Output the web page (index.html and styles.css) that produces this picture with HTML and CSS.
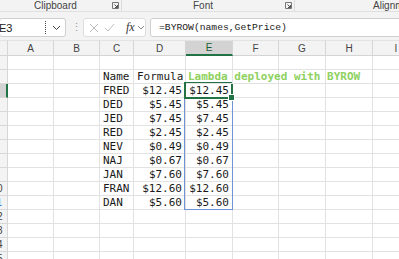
FILE: index.html
```html
<!DOCTYPE html>
<html>
<head>
<meta charset="utf-8">
<link rel="stylesheet" href="styles.css">
</head>
<body>
<div class="app">
  <div class="ribbon">
    <div class="group g1"><span class="glabel">Clipboard</span><span class="launcher"><svg width="7" height="7" viewBox="0 0 7 7"><path d="M0.5 0.5H6.5V6.5H0.5Z" fill="none" stroke="#777" stroke-width="1"/><path d="M2.5 2.5L5.5 5.5M3 5.5H5.5V3" fill="none" stroke="#555" stroke-width="1"/></svg></span></div>
    <div class="group g2"><span class="glabel">Font</span><span class="launcher"><svg width="7" height="7" viewBox="0 0 7 7"><path d="M0.5 0.5H6.5V6.5H0.5Z" fill="none" stroke="#777" stroke-width="1"/><path d="M2.5 2.5L5.5 5.5M3 5.5H5.5V3" fill="none" stroke="#555" stroke-width="1"/></svg></span></div>
    <div class="group g3"><span class="glabel">Alignment</span></div>
  </div>
  <div class="fbar">
    <div class="namebox">
      <span class="ref">E3</span>
      <span class="grip"></span>
      <svg class="chev" width="9" height="6" viewBox="0 0 9 6"><path d="M1 1L4.5 4.5L8 1" fill="none" stroke="#444" stroke-width="1"/></svg>
    </div>
    <div class="vdots">⋮</div>
    <div class="fxbox">
      <svg class="ico" width="10" height="10" viewBox="0 0 10 10"><path d="M1 1L9 9M9 1L1 9" stroke="#bdbdbd" stroke-width="1" fill="none"/></svg>
      <svg class="ico" width="11" height="9" viewBox="0 0 11 9"><path d="M1 5L4 8L10 1" stroke="#bdbdbd" stroke-width="1" fill="none"/></svg>
      <span class="fx">fx</span>
      <svg class="chev small" width="8" height="5" viewBox="0 0 8 5"><path d="M1 1L4 4L7 1" fill="none" stroke="#888" stroke-width="1"/></svg>
    </div>
    <div class="input">=BYROW(names,GetPrice)</div>
  </div>
  <div class="sheet">
    <div class="grid">
      <div class="ch corner"></div><div class="ch">A</div><div class="ch">B</div><div class="ch">C</div><div class="ch">D</div><div class="ch sel">E</div><div class="ch">F</div><div class="ch">G</div><div class="ch">H</div><div class="ch">I</div>

      <div class="rh"><span>1</span></div><div class="c"></div><div class="c"></div><div class="c"></div><div class="c"></div><div class="c"></div><div class="c"></div><div class="c"></div><div class="c"></div><div class="c"></div>

      <div class="rh"><span>2</span></div><div class="c"></div><div class="c"></div><div class="c t">Name</div><div class="c t">Formula</div><div class="c t green">Lambda deployed with BYROW</div><div class="c"></div><div class="c"></div><div class="c"></div><div class="c"></div>

      <div class="rh rsel"><span>3</span></div><div class="c"></div><div class="c"></div><div class="c t">FRED</div><div class="c t r">$12.45</div><div class="c t r">$12.45</div><div class="c"></div><div class="c"></div><div class="c"></div><div class="c"></div>

      <div class="rh"><span>4</span></div><div class="c"></div><div class="c"></div><div class="c t">DED</div><div class="c t r">$5.45</div><div class="c t r">$5.45</div><div class="c"></div><div class="c"></div><div class="c"></div><div class="c"></div>

      <div class="rh"><span>5</span></div><div class="c"></div><div class="c"></div><div class="c t">JED</div><div class="c t r">$7.45</div><div class="c t r">$7.45</div><div class="c"></div><div class="c"></div><div class="c"></div><div class="c"></div>

      <div class="rh"><span>6</span></div><div class="c"></div><div class="c"></div><div class="c t">RED</div><div class="c t r">$2.45</div><div class="c t r">$2.45</div><div class="c"></div><div class="c"></div><div class="c"></div><div class="c"></div>

      <div class="rh"><span>7</span></div><div class="c"></div><div class="c"></div><div class="c t">NEV</div><div class="c t r">$0.49</div><div class="c t r">$0.49</div><div class="c"></div><div class="c"></div><div class="c"></div><div class="c"></div>

      <div class="rh"><span>8</span></div><div class="c"></div><div class="c"></div><div class="c t">NAJ</div><div class="c t r">$0.67</div><div class="c t r">$0.67</div><div class="c"></div><div class="c"></div><div class="c"></div><div class="c"></div>

      <div class="rh"><span>9</span></div><div class="c"></div><div class="c"></div><div class="c t">JAN</div><div class="c t r">$7.60</div><div class="c t r">$7.60</div><div class="c"></div><div class="c"></div><div class="c"></div><div class="c"></div>

      <div class="rh"><span>10</span></div><div class="c"></div><div class="c"></div><div class="c t">FRAN</div><div class="c t r">$12.60</div><div class="c t r">$12.60</div><div class="c"></div><div class="c"></div><div class="c"></div><div class="c"></div>

      <div class="rh blue"><span>11</span></div><div class="c"></div><div class="c"></div><div class="c t">DAN</div><div class="c t r">$5.60</div><div class="c t r">$5.60</div><div class="c"></div><div class="c"></div><div class="c"></div><div class="c"></div>

      <div class="rh"><span>12</span></div><div class="c"></div><div class="c"></div><div class="c"></div><div class="c"></div><div class="c"></div><div class="c"></div><div class="c"></div><div class="c"></div><div class="c"></div>

      <div class="rh"><span>13</span></div><div class="c"></div><div class="c"></div><div class="c"></div><div class="c"></div><div class="c"></div><div class="c"></div><div class="c"></div><div class="c"></div><div class="c"></div>

      <div class="rh"><span>14</span></div><div class="c"></div><div class="c"></div><div class="c"></div><div class="c"></div><div class="c"></div><div class="c"></div><div class="c"></div><div class="c"></div><div class="c"></div>

      <div class="rh"><span>15</span></div><div class="c"></div><div class="c"></div><div class="c"></div><div class="c"></div><div class="c"></div><div class="c"></div><div class="c"></div><div class="c"></div><div class="c"></div>
    </div>
    <div class="spill"></div>
    <div class="active"><span class="handle"></span></div>
  </div>
</div>
</body>
</html>
```

FILE: styles.css
```css
html, body {
  margin: 0;
  padding: 0;
  background: #ffffff;
  overflow: hidden;
}
.app {
  width: 399px;
  height: 259px;
  overflow: hidden;
  font-family: "Liberation Sans", Arial, sans-serif;
  background: #f3f3f3;
}
.ribbon {
  display: flex;
  height: 11px;
  border-bottom: 1px solid #e0e0e0;
  background: #f3f3f3;
}
.group {
  display: flex;
  align-items: center;
  box-sizing: border-box;
  height: 11px;
  border-right: 1px solid #dcdcdc;
  flex-shrink: 0;
}
.g1 { width: 122px; padding-left: 34px; }
.g2 { width: 173px; padding-left: 71px; }
.g3 { flex: 1 1 0; min-width: 0; padding-left: 78px; border-right: none; overflow: hidden; }
.glabel {
  font-size: 10px;
  color: #444;
  line-height: 11px;
  white-space: nowrap;
}
.launcher {
  margin-left: auto;
  margin-right: 2px;
  display: flex;
}
.fbar {
  display: flex;
  align-items: center;
  height: 19px;
  margin-top: 6px;
  margin-bottom: 3px;
}
.namebox {
  box-sizing: border-box;
  flex-shrink: 0;
  width: 67px;
  height: 19px;
  margin-left: -1px;
  background: #fff;
  border: 1px solid #cfcfcf;
  border-radius: 3px;
  display: flex;
  align-items: center;
}
.ref {
  font-size: 11px;
  color: #222;
  margin-left: -1px;
}
.grip {
  width: 1px;
  height: 13px;
  margin-left: 33px;
  border-left: 1px dotted #444;
}
.chev {
  margin-left: 5px;
}
.vdots {
  flex-shrink: 0;
  width: 14px;
  text-align: center;
  font-size: 11px;
  color: #999;
  margin-left: 3px;
}
.fxbox {
  box-sizing: border-box;
  flex-shrink: 0;
  width: 63px;
  height: 19px;
  background: #fff;
  border: 1px solid #dedede;
  border-radius: 3px;
  display: flex;
  align-items: center;
  padding-left: 5px;
}
.fxbox .ico { margin-right: 5px; }
.fx {
  font-family: "Liberation Serif", "Times New Roman", serif;
  font-style: italic;
  font-size: 12px;
  color: #333;
  margin-left: 6px;
}
.chev.small { margin-left: 2px; }
.input {
  box-sizing: border-box;
  flex: 1 1 0;
  min-width: 0;
  height: 19px;
  margin-left: 4px;
  margin-right: -20px;
  background: #fff;
  border: 1px solid #cfcfcf;
  border-radius: 3px;
  padding-left: 8px;
  font-family: "Liberation Mono", "DejaVu Sans Mono", monospace;
  font-size: 9.7px;
  line-height: 17px;
  color: #222;
  white-space: nowrap;
}
.sheet {
  position: relative;
  background: #fff;
}
.grid {
  display: grid;
  grid-template-columns: 8px 46px 46px 34px 52px 47px 46px 47px 47px 47px;
  grid-auto-rows: 14px;
  grid-template-rows: 16px;
}
.ch {
  box-sizing: border-box;
  background: #f3f3f3;
  border-top: 1px solid #e3e3e3;
  border-right: 1px solid #d6d6d6;
  border-bottom: 1px solid #d4d4d4;
  font-size: 10px;
  color: #444;
  display: flex;
  align-items: center;
  justify-content: center;
}
.ch.sel {
  background: #d3d3d3;
  color: #1f5c34;
  border-bottom: 2px solid #217346;
}
.rh {
  box-sizing: border-box;
  background: #f3f3f3;
  border-right: 1px solid #d6d6d6;
  border-bottom: 1px solid #d8d8d8;
  font-size: 10px;
  color: #444;
  display: flex;
  justify-content: flex-end;
  align-items: center;
  overflow: hidden;
  white-space: nowrap;
}
.rh span {
  flex-shrink: 0;
  width: 20px;
  text-align: center;
}
.rh.rsel {
  background: #d3d3d3;
  border-right: 2px solid #217346;
}
.rh.blue { color: #2a6fd6; }
.c {
  box-sizing: border-box;
  border-right: 1px solid #e2e2e2;
  border-bottom: 1px solid #e2e2e2;
  font-family: "DejaVu Sans Mono", monospace;
  font-size: 11px;
  color: #1a1a1a;
  white-space: nowrap;
  line-height: 13px;
  padding: 0 3px;
}
.c.r { text-align: right; padding-right: 3px; }
.c.green {
  color: #8fd15f;
  font-weight: bold;
  padding-left: 2px;
  position: relative;
  z-index: 1;
}
.spill {
  position: absolute;
  left: 184px;
  top: 57px;
  width: 49px;
  height: 113px;
  box-sizing: border-box;
  border: 1px solid #6f93d6;
}
.active {
  position: absolute;
  left: 184px;
  top: 42px;
  width: 49px;
  height: 17px;
  box-sizing: border-box;
  border: 2px solid #217346;
}
.handle {
  position: absolute;
  right: -4px;
  bottom: -4px;
  width: 5px;
  height: 5px;
  background: #217346;
  border: 1px solid #fff;
}
```
